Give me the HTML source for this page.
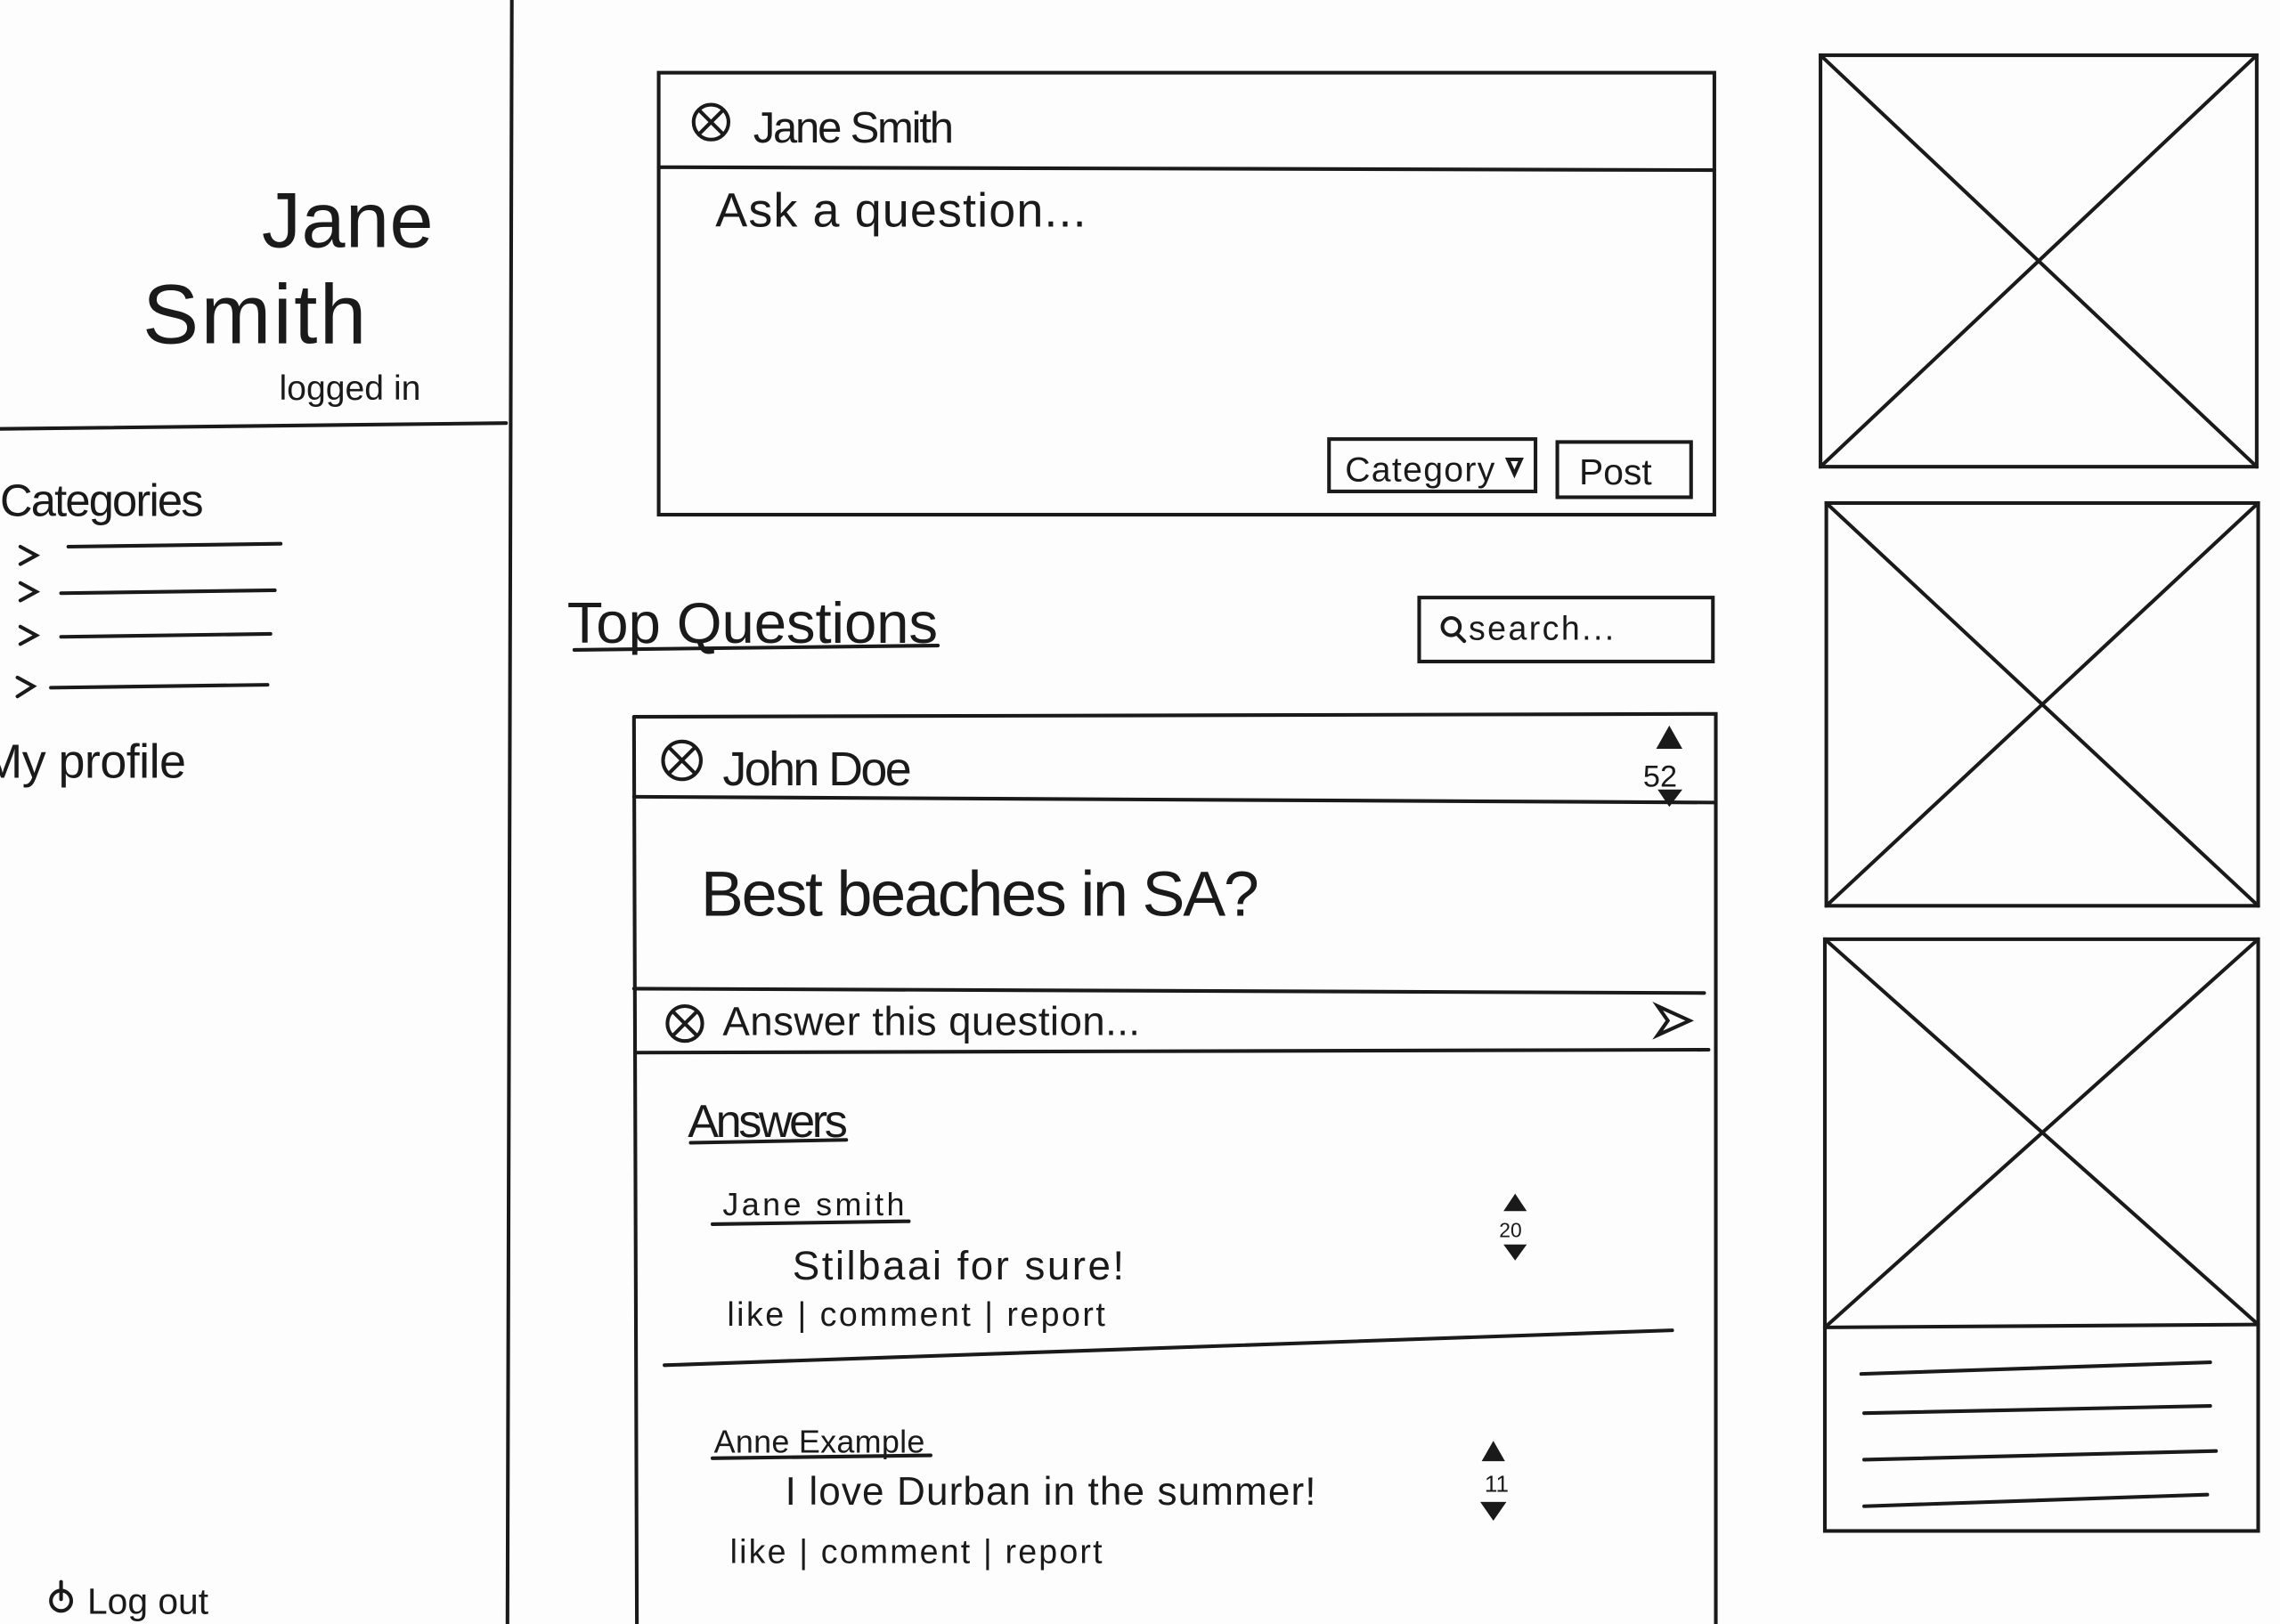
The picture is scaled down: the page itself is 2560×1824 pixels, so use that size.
<!DOCTYPE html>
<html><head><meta charset="utf-8"><style>
html,body{margin:0;padding:0;background:#fff;}
svg{display:block;}
text{font-family:"Liberation Sans","DejaVu Sans",sans-serif;fill:#1a1a1a;}
</style></head><body>
<svg width="2560" height="1824" viewBox="0 0 1568 1117" preserveAspectRatio="none" xmlns="http://www.w3.org/2000/svg">
<rect width="1568" height="1117" fill="#fdfdfd"/>
<g stroke="#1a1a1a" stroke-width="2.5" fill="none" stroke-linecap="round">
<line x1="352" y1="0" x2="349" y2="1117"/>
<line x1="0" y1="295" x2="348" y2="291"/>
<line x1="47" y1="376" x2="193" y2="374"/>
<line x1="42" y1="408" x2="189" y2="406"/>
<line x1="42" y1="438" x2="186" y2="436"/>
<line x1="35" y1="473" x2="184" y2="471"/>
<path d="M14 376 L25 382 L14 388 M14 401 L25 407 L14 413 M14 431 L25 437 L14 443 M12 466 L23 472 L12 479"/>
<circle cx="42" cy="1101" r="7"/><line x1="42" y1="1088" x2="42" y2="1100"/>
<rect x="453" y="50" width="726" height="304"/>
<line x1="453" y1="115" x2="1179" y2="117"/>
<circle cx="489" cy="84" r="12"/><path d="M481 76 L497 92 M497 76 L481 92"/>
<rect x="914" y="302" width="142" height="36"/>
<rect x="1071" y="304" width="92" height="38"/>
<path d="M1037 316 L1046 316 L1041.5 326 Z"/>
<rect x="976" y="411" width="202" height="44"/>
<circle cx="998" cy="431" r="6"/><line x1="1002" y1="436" x2="1007" y2="441"/>
<line x1="395" y1="447" x2="645" y2="444"/>
<path d="M436 493 L1180 491 L1180 1117 M436 493 L438 1117"/>
<line x1="436" y1="548" x2="1180" y2="552"/>
<circle cx="469" cy="523" r="13"/><path d="M460 514 L478 532 M478 514 L460 532"/>
<line x1="436" y1="680" x2="1172" y2="683"/>
<line x1="438" y1="724" x2="1175" y2="722"/>
<circle cx="471" cy="704" r="12"/><path d="M463 696 L479 712 M479 696 L463 712"/>
<path d="M1140 692 L1162 702 L1140 712 L1147 702 Z"/>
<line x1="475" y1="786" x2="582" y2="784"/>
<line x1="490" y1="842" x2="625" y2="840"/>
<line x1="457" y1="939" x2="1150" y2="915"/>
<line x1="490" y1="1003" x2="640" y2="1001"/>
<rect x="1252" y="38" width="300" height="283"/>
<path d="M1252 38 L1552 321 M1552 38 L1252 321"/>
<rect x="1256" y="346" width="297" height="277"/>
<path d="M1256 346 L1553 623 M1553 346 L1256 623"/>
<rect x="1255" y="646" width="298" height="407"/>
<line x1="1255" y1="913" x2="1553" y2="911"/>
<path d="M1255 646 L1553 911 M1553 646 L1255 913"/>
<line x1="1280" y1="945" x2="1520" y2="937"/>
<line x1="1282" y1="972" x2="1520" y2="967"/>
<line x1="1282" y1="1004" x2="1524" y2="998"/>
<line x1="1282" y1="1036" x2="1518" y2="1028"/>
</g>
<g fill="#1a1a1a">
<path d="M1148 499 L1157 515 L1139 515 Z"/><path d="M1140 543 L1157 543 L1148 555 Z"/>
<path d="M1042 821 L1050 833 L1034 833 Z"/><path d="M1034 856 L1050 856 L1042 867 Z"/>
<path d="M1027 991 L1035 1005 L1019 1005 Z"/><path d="M1018 1033 L1036 1033 L1027 1046 Z"/>
</g>
<text x="180" y="170" font-size="54" fill="#444" textLength="118">Jane</text>
<text x="98" y="236" font-size="58" fill="#444" textLength="154">Smith</text>
<text x="192" y="275" font-size="24">logged in</text>
<text x="0" y="355" font-size="31" fill="#333" textLength="140">Categories</text>
<text x="-12" y="535" font-size="33" textLength="140">My profile</text>
<text x="60" y="1110" font-size="25">Log out</text>
<text x="518" y="98" font-size="30" textLength="138">Jane Smith</text>
<text x="492" y="156" font-size="33" fill="#333" textLength="255">Ask a question...</text>
<text x="925" y="331" font-size="24" textLength="103">Category</text>
<text x="1086" y="333" font-size="25">Post</text>
<text x="390" y="442" font-size="40" textLength="255">Top Questions</text>
<text x="1010" y="440" font-size="23" textLength="100">search...</text>
<text x="497" y="540" font-size="33" textLength="130">John Doe</text>
<text x="1130" y="541" font-size="21">52</text>
<text x="482" y="630" font-size="44" textLength="384">Best beaches in SA?</text>
<text x="497" y="712" font-size="28" textLength="287">Answer this question...</text>
<text x="473" y="782" font-size="32" textLength="110">Answers</text>
<text x="497" y="836" font-size="22" textLength="125">Jane smith</text>
<text x="545" y="880" font-size="28" textLength="228">Stilbaai for sure!</text>
<text x="500" y="912" font-size="23" textLength="260">like | comment | report</text>
<text x="1031" y="851" font-size="14">20</text>
<text x="491" y="999" font-size="22" textLength="145">Anne Example</text>
<text x="540" y="1035" font-size="27" textLength="365">I love Durban in the summer!</text>
<text x="502" y="1075" font-size="23" textLength="256">like | comment | report</text>
<text x="1021" y="1026" font-size="16">11</text>
</svg>
</body></html>
